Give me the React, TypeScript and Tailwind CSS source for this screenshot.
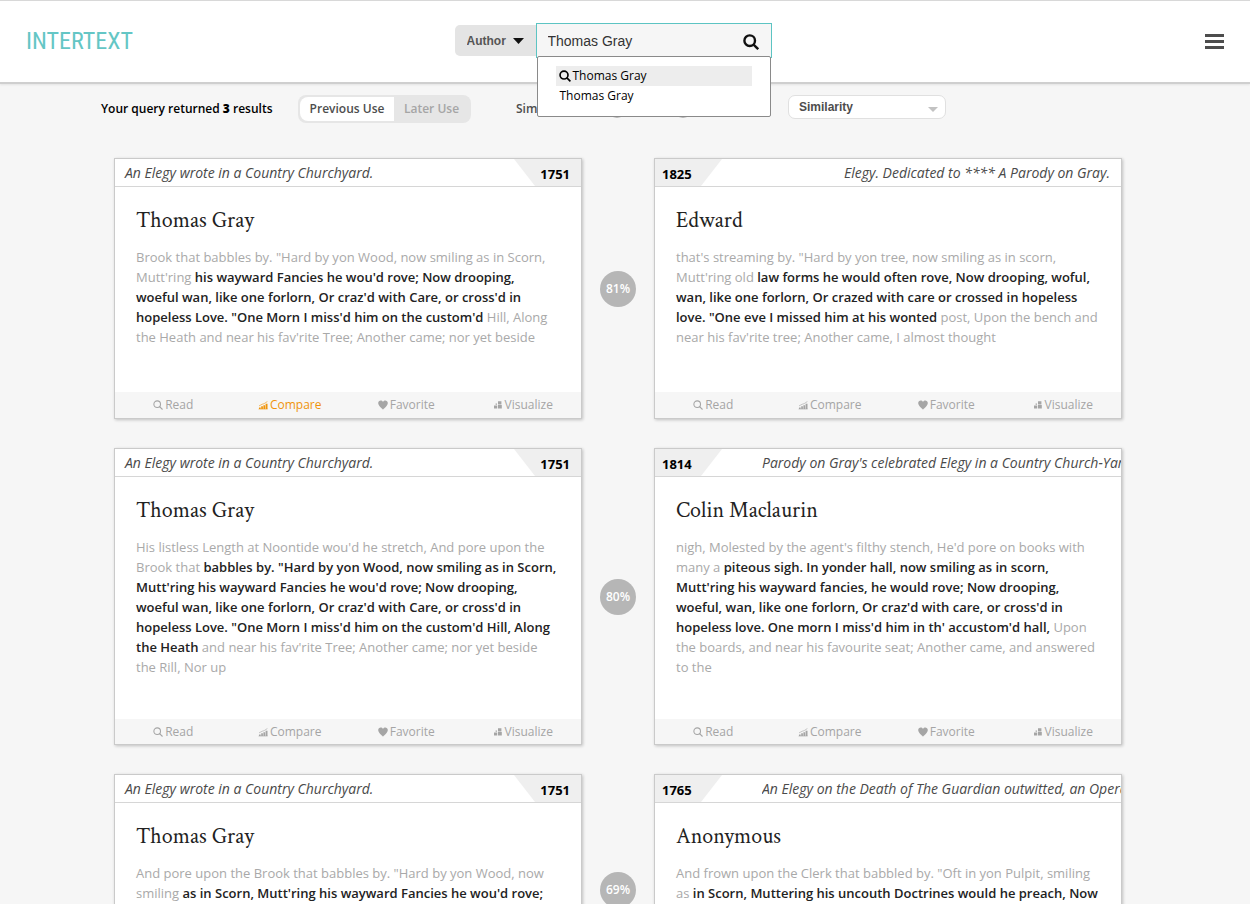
import { useState } from "react";

type Side = { title: string; year: string; author: string; before: string; match: string; after: string; active?: string };
type Pair = { score: string; pad: string; left: Side; right: Side };

const gray = { title: "An Elegy wrote in a Country Churchyard.", year: "1751", author: "Thomas Gray" };

const pairs: Pair[] = [
  {
    score: "81%",
    pad: "pb-[45px]",
    left: {
      ...gray,
      active: "Compare",
      before: "Brook that babbles by. \"Hard by yon Wood, now smiling as in Scorn, Mutt'ring",
      match: "his wayward Fancies he wou'd rove; Now drooping, woeful wan, like one forlorn, Or craz'd with Care, or cross'd in hopeless Love. \"One Morn I miss'd him on the custom'd",
      after: "Hill, Along the Heath and near his fav'rite Tree; Another came; nor yet beside",
    },
    right: {
      title: "Elegy. Dedicated to **** A Parody on Gray.",
      year: "1825",
      author: "Edward",
      before: "that's streaming by. \"Hard by yon tree, now smiling as in scorn, Mutt'ring old",
      match: "law forms he would often rove, Now drooping, woful, wan, like one forlorn, Or crazed with care or crossed in hopeless love. \"One eve I missed him at his wonted",
      after: "post, Upon the bench and near his fav'rite tree; Another came, I almost thought",
    },
  },
  {
    score: "80%",
    pad: "pb-[42px]",
    left: {
      ...gray,
      before: "His listless Length at Noontide wou'd he stretch, And pore upon the Brook that",
      match: "babbles by. \"Hard by yon Wood, now smiling as in Scorn, Mutt'ring his wayward Fancies he wou'd rove; Now drooping, woeful wan, like one forlorn, Or craz'd with Care, or cross'd in hopeless Love. \"One Morn I miss'd him on the custom'd Hill, Along the Heath",
      after: "and near his fav'rite Tree; Another came; nor yet beside the Rill, Nor up",
    },
    right: {
      title: "Parody on Gray's celebrated Elegy in a Country Church-Yard",
      year: "1814",
      author: "Colin Maclaurin",
      before: "nigh, Molested by the agent's filthy stench, He'd pore on books with many a",
      match: "piteous sigh. In yonder hall, now smiling as in scorn, Mutt'ring his wayward fancies, he would rove; Now drooping, woeful, wan, like one forlorn, Or craz'd with care, or cross'd in hopeless love. One morn I miss'd him in th' accustom'd hall,",
      after: "Upon the boards, and near his favourite seat; Another came, and answered to the",
    },
  },
  {
    score: "69%",
    pad: "pb-[37px]",
    left: {
      ...gray,
      before: "And pore upon the Brook that babbles by. \"Hard by yon Wood, now smiling",
      match: "as in Scorn, Mutt'ring his wayward Fancies he wou'd rove; Now drooping, woeful wan, like one forlorn, Or craz'd with Care,",
      after: "or cross'd in hopeless Love. \"One Morn",
    },
    right: {
      title: "An Elegy on the Death of The Guardian outwitted, an Opera",
      year: "1765",
      author: "Anonymous",
      before: "And frown upon the Clerk that babbled by. \"Oft in yon Pulpit, smiling as",
      match: "in Scorn, Muttering his uncouth Doctrines would he preach, Now drooping, woeful wan, like one forlorn,",
      after: "Or craz'd with Care, or cross'd in hopeless Love.",
    },
  },
];

function SearchIcon({ className, stroke }: { className: string; stroke: number }) {
  return (
    <svg viewBox="0 0 16 16" className={className} fill="none" stroke="currentColor" strokeWidth={stroke} aria-hidden="true">
      <circle cx="6.7" cy="6.7" r="5.3" />
      <path d="M10.6 10.6 L15.2 15.2" />
    </svg>
  );
}

function ReadIcon() {
  return <SearchIcon className="size-[10px]" stroke={1.7} />;
}

function CompareIcon() {
  return (
    <svg viewBox="0 0 10 10" className="size-[10px]" fill="currentColor" aria-hidden="true">
      <path d="M1 7.400h1.700v1.600H1zM3.200 6.200h1.700v2.800H3.200zM5.400 5.200h1.700v3.800H5.400zM7.600 3.800h1.900v5.200H7.600z" />
      <path d="M1 5.900 L4 4.300 L6.200 3.600 L9.400 1.500" fill="none" stroke="currentColor" strokeWidth="0.600" />
      <path d="M0.500 8.800h9.200v0.500H0.500z" />
    </svg>
  );
}

function HeartIcon() {
  return (
    <svg viewBox="0 0 10 10" className="size-[10px]" fill="currentColor" aria-hidden="true">
      <path d="M5 9.700 C4 8.500 0.200 6 0.200 3.100 C0.200 0.400 3.700 -0.300 5 1.900 C6.300 -0.300 9.800 0.400 9.800 3.100 C9.800 6 6 8.500 5 9.700z" />
    </svg>
  );
}

function VisualizeIcon() {
  return (
    <svg viewBox="0 0 10 10" className="size-[10px]" fill="currentColor" aria-hidden="true">
      <path d="M1 5.500h3.200v3H1zM5 1.200h3.400v3.200H5zM5 5h3.800v3.500H5zM2.600 3.500h1.400v1.300H2.600z" />
    </svg>
  );
}

const actions = [
  { label: "Read", Icon: ReadIcon },
  { label: "Compare", Icon: CompareIcon },
  { label: "Favorite", Icon: HeartIcon },
  { label: "Visualize", Icon: VisualizeIcon },
];

function Card({ side, mirrored, pad }: { side: Side; mirrored?: boolean; pad: string }) {
  const year = (
    <div className={`relative flex h-full w-[67px] shrink-0 items-center text-[13px] font-bold text-black ${mirrored ? "justify-start pl-[7px]" : "justify-end pr-[11px]"}`}>
      <svg viewBox="0 0 67 28" preserveAspectRatio="none" className="absolute inset-0 size-full" aria-hidden="true">
        <polygon points={mirrored ? "0,0 67,0 46,28 0,28" : "0,0 67,0 67,28 21,28"} fill="#efefef" />
      </svg>
      <span className="relative pt-1">{side.year}</span>
    </div>
  );
  return (
    <article className="flex min-w-0 flex-1 flex-col border border-[#cacaca] bg-white shadow-[1px_1px_3px_rgba(0,0,0,0.22)]">
      <header className="flex h-[28px] items-center overflow-hidden border-b border-[#d6d6d6]">
        {mirrored && year}
        <div className={`flex min-w-0 flex-1 overflow-hidden pt-px text-sm italic whitespace-nowrap text-[#4a4a4a] ${mirrored ? "ml-10" : "pl-[10px]"}`}>
          <span className={mirrored ? "ml-auto pr-[11px]" : ""}>{side.title}</span>
        </div>
        {!mirrored && year}
      </header>
      <div className={`flex-1 px-[21px] pt-[19px] ${pad}`}>
        <h2 className="font-['Crimson_Text','Liberation_Serif',serif] text-[22px] leading-[30px] text-[#222]">{side.author}</h2>
        <p className="mt-[11px] text-[13px] leading-5 text-[#a9a9a9]">
          {side.before} <b className="font-semibold text-[#222]">{side.match}</b> {side.after}
        </p>
      </div>
      <footer className={`grid grid-cols-4 bg-[#f6f6f6] text-xs ${pad === "pb-[45px]" ? "h-[26px]" : "h-[25px]"}`}>
        {actions.map(({ label, Icon }) => (
          <button key={label} type="button" className={`flex items-center justify-center gap-[2px] ${side.active === label ? "text-[#f0940a]" : "text-[#a5a5a5]"}`}>
            <Icon />
            {label}
          </button>
        ))}
      </footer>
    </article>
  );
}

const thumb =
  "pointer-events-none absolute inset-0 size-full appearance-none bg-transparent [&::-webkit-slider-thumb]:pointer-events-auto [&::-webkit-slider-thumb]:size-[18px] [&::-webkit-slider-thumb]:appearance-none [&::-webkit-slider-thumb]:rounded-full [&::-webkit-slider-thumb]:bg-[#b6b6b6]";

export default function App() {
  const [query, setQuery] = useState("Thomas Gray");
  const [later, setLater] = useState(false);
  const [low, setLow] = useState(50);
  const [high, setHigh] = useState(100);

  return (
    <div className="flex h-screen flex-col bg-[#f6f6f6] font-['Open_Sans','Noto_Sans',sans-serif] text-black">
      <header className="relative z-10 flex h-[84px] shrink-0 items-center border-t border-b-2 border-t-[#d8d8d8] border-b-[#cfcfcf] bg-white px-[26px] shadow-[0_1px_2px_rgba(0,0,0,0.08)]">
        <a href="#home" className="mb-[2px] flex-1 font-['Roboto_Condensed','Roboto',sans-serif] text-2xl leading-8 text-[#64c6c5]">INTERTEXT</a>
        <form className="mr-6 mb-[2px] flex items-center" onSubmit={(e) => e.preventDefault()}>
          <div className="relative">
            <select aria-label="Search field" className="h-[31px] w-[81px] appearance-none rounded-l-[5px] bg-[#e4e4e4] pl-3 font-['Liberation_Sans',sans-serif] text-xs font-bold text-[#555]">
              <option>Author</option>
              <option>Title</option>
            </select>
            <svg viewBox="0 0 11 6" className="pointer-events-none absolute top-[13px] right-3 h-[6px] w-[11px]" aria-hidden="true">
              <path d="M0 0h11L5.500 6z" fill="#111" />
            </svg>
          </div>
          <div className="relative h-[35px] w-[236px] border border-[#5cc4c3] bg-[#f6f6f6]">
            <input aria-label="Search" value={query} onChange={(e) => setQuery(e.target.value)} className="size-full bg-transparent pr-10 pl-[11px] font-['Liberation_Sans',sans-serif] text-sm text-[#333] outline-none" />
            <button type="submit" aria-label="Search" className="absolute top-[10px] right-3 text-[#111]">
              <SearchIcon className="size-[16px]" stroke={2.4} />
            </button>
            <ul className="absolute top-8 left-0 h-[61px] w-[234px] rounded-[2px] border border-[#8a8a8a] bg-white px-[18px] pt-[9px] text-xs leading-5">
              <li className="flex items-center gap-[2px] bg-[#ededed] pl-[3px]">
                <SearchIcon className="size-[12px]" stroke={2.2} />
                Thomas Gray
              </li>
              <li className="pl-1">Thomas Gray</li>
            </ul>
          </div>
        </form>
        <div className="flex flex-1 justify-end">
          <button type="button" aria-label="Menu" className="flex w-[19px] flex-col gap-[3px]">
            <span className="h-[3px] bg-[#4d4d4d]" />
            <span className="h-[3px] bg-[#4d4d4d]" />
            <span className="h-[3px] bg-[#4d4d4d]" />
          </button>
        </div>
      </header>

      <main className="min-h-0 flex-1 overflow-y-auto pr-[14px] [scrollbar-width:none]">
        <div className="mx-auto max-w-[1036px] px-[14px]">
          <div className="-ml-[13px] flex h-[49px] items-center text-xs font-semibold">
            <p className="w-[197px]">Your query returned <b className="font-extrabold">3</b> results</p>
            <div className="flex h-7 w-[173px] rounded-lg bg-[#e6e6e6] p-[2px] text-[#4d4d4d]">
              <button type="button" onClick={() => setLater(false)} className={`h-6 w-[94px] rounded-l-lg ${later ? "text-[#a5a5a5]" : "bg-white"}`}>Previous Use</button>
              <button type="button" onClick={() => setLater(true)} className={`h-6 w-[75px] rounded-r-lg ${later ? "bg-white" : "text-[#a5a5a5]"}`}>Later Use</button>
            </div>
            <div className="ml-[45px] flex w-[272px] items-center text-[#4d4d4d]">
              <span className="w-[92px]">Similarity</span>
              <div className="relative h-[18px] w-[84px]">
                <input type="range" aria-label="Lowest similarity" min={50} max={100} value={low} onChange={(e) => setLow(Math.min(Number(e.target.value), high))} className={thumb} />
                <input type="range" aria-label="Highest similarity" min={50} max={100} value={high} onChange={(e) => setHigh(Math.max(Number(e.target.value), low))} className={thumb} />
              </div>
            </div>
            <div className="relative mb-1">
              <select aria-label="Sort by" className="h-6 w-[158px] appearance-none rounded-[7px] border border-[#e0e0e0] bg-white pl-[10px] font-['Liberation_Sans',sans-serif] text-xs font-bold text-[#4d4d4d]">
                <option>Similarity</option>
                <option>Author</option>
              </select>
              <svg viewBox="0 0 10 5" className="pointer-events-none absolute top-3 right-2 h-[5px] w-[10px]" aria-hidden="true">
                <path d="M0 0h10L5 5z" fill="#c2c2c2" />
              </svg>
            </div>
          </div>

          <div className="flex flex-col gap-[29px] pt-[25px] pb-8">
            {pairs.map((pair) => (
              <section key={pair.score} className="flex">
                <Card side={pair.left} pad={pair.pad} />
                <div className="mx-[18px] flex size-9 shrink-0 items-center justify-center self-center rounded-full bg-[#b6b6b6] text-xs font-semibold text-white">{pair.score}</div>
                <Card side={pair.right} pad={pair.pad} mirrored />
              </section>
            ))}
          </div>
        </div>
      </main>
    </div>
  );
}
